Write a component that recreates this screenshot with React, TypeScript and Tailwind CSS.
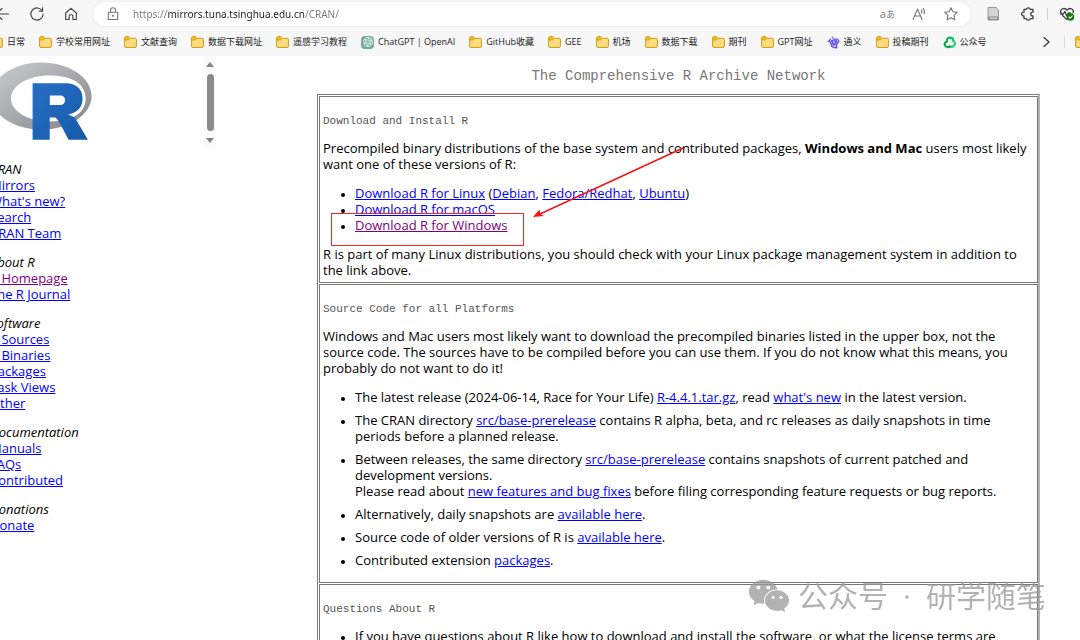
import { type ReactNode } from "react";
import { SiOpenai } from "react-icons/si";
import { FaWeixin } from "react-icons/fa";

function FolderIcon() {
  return (
    <svg viewBox="0 0 13 12" className="h-3 w-[13px] shrink-0" aria-hidden="true">
      <path d="M.6 10V1.900Q.6.7 1.800.7H4.600L6 2.300H11.200Q12.400 2.300 12.400 3.500V10Q12.400 11.400 11 11.400H2Q.6 11.400.6 10Z" fill="#ffdc7c" stroke="#c99a1c" strokeWidth="1" />
      <path d="M1 1.900Q1 1.100 1.800 1.100H4.400L5.600 2.500 4.400 3.700H1Z" fill="#f2b90f" />
      <path d="M1 4H4.600L6 2.500" fill="none" stroke="#c99a1c" strokeWidth=".8" />
    </svg>
  );
}

function OpenAiIcon() {
  return (
    <span className="flex size-[13px] shrink-0 items-center justify-center rounded-sm bg-[#74aa9c] text-white">
      <SiOpenai size={10} aria-hidden="true" />
    </span>
  );
}

function TongyiIcon() {
  return (
    <svg viewBox="0 0 24 24" className="size-[13px] shrink-0" fill="none" strokeWidth="2.6" strokeLinejoin="round" aria-hidden="true">
      <path d="M9 1l3 5h8l2 4" stroke="#7c6cf5" />
      <path d="M22 9l-5 8 1 5-6-1" stroke="#5a3fe0" />
      <path d="M12 22l-3-5-5-8 3-4M1 10h4M7 19l3-2" stroke="#6a55ee" />
      <path d="M8 9h10l-5 8z" stroke="#5a3fe0" fill="#e6e2ff" />
    </svg>
  );
}

function OfficialAccountIcon() {
  return (
    <svg viewBox="0 0 24 24" className="size-[13px] shrink-0" fill="none" strokeWidth="4" strokeLinecap="round" aria-hidden="true">
      <path d="M7 10C7 5 10 3 13 3c4 0 6 3 6 6" stroke="#07c160" />
      <path d="M19 9c3 2 4 5 2 8-2 3-5 4-9 2" stroke="#2dcf78" />
      <path d="M13 19c-3 2-7 2-9-1-2-3-1-6 3-8" stroke="#05a854" />
    </svg>
  );
}

const bookmarks: { label: string; icon?: ReactNode }[] = [
  { label: "日常" },
  { label: "学校常用网址" },
  { label: "文献查询" },
  { label: "数据下载网址" },
  { label: "遥感学习教程" },
  { label: "ChatGPT | OpenAI", icon: <OpenAiIcon /> },
  { label: "GitHub收藏" },
  { label: "GEE" },
  { label: "机场" },
  { label: "数据下载" },
  { label: "期刊" },
  { label: "GPT网址" },
  { label: "通义", icon: <TongyiIcon /> },
  { label: "投稿期刊" },
  { label: "公众号", icon: <OfficialAccountIcon /> },
];

function IconButton({ label, children }: { label: string; children: ReactNode }) {
  return (
    <button type="button" aria-label={label} className="flex size-4 shrink-0 items-center justify-center text-[#3c3c3c]">
      {children}
    </button>
  );
}

function Stroke({ children, className = "size-4" }: { children: ReactNode; className?: string }) {
  return (
    <svg viewBox="0 0 16 16" className={className} fill="none" stroke="currentColor" strokeWidth="1.1" strokeLinecap="round" strokeLinejoin="round" aria-hidden="true">
      {children}
    </svg>
  );
}

function AddressBar() {
  return (
    <div className="flex h-7 items-center">
      <div className="-ml-[5px] flex items-center gap-[18px]">
        <IconButton label="Back">
          <Stroke><path d="M13.500 8H1.500M7 2.500 1.500 8 7 13.500" /></Stroke>
        </IconButton>
        <IconButton label="Refresh">
          <Stroke><path d="M13.300 5A6.100 6.100 0 1 0 14.100 8M13.600 1.800V5.200H10.200" /></Stroke>
        </IconButton>
        <IconButton label="Home">
          <Stroke><path d="M2.700 7 8 2.300l5.300 4.700v6.500H9.900V9.700Q9.900 8.700 8.900 8.700H7.100Q6.100 8.700 6.100 9.700v3.800H2.700Z" /></Stroke>
        </IconButton>
      </div>
      <div className="ml-3.5 flex h-6 flex-1 items-center rounded-full bg-white px-3 shadow-[0_0_3px_#e2e2e2]">
        <Stroke className="size-4 text-[#777]">
          <path d="M3.300 6.200h9.400v7.300H3.300ZM5.500 6V4.200a2.500 2.500 0 0 1 5 0V6" />
          <circle cx="8" cy="9.8" r=".5" fill="currentColor" />
        </Stroke>
        <input
          aria-label="Address"
          type="text"
          defaultValue="https://mirrors.tuna.tsinghua.edu.cn/CRAN/"
          className="ml-3 min-w-0 flex-1 bg-[linear-gradient(to_right,#777_35px,#1c1c1c_35px,#1c1c1c_172px,#777_172px)] bg-clip-text font-['Noto_Sans',sans-serif] text-[10px] leading-4 text-transparent outline-none"
        />
        <div className="flex items-center gap-4 text-[#777]">
          <button type="button" aria-label="Translate" className="flex items-baseline text-[11px] leading-4">
            a<span className="text-[9px]">あ</span>
          </button>
          <button type="button" aria-label="Read aloud">
            <Stroke><path d="M2 13.500 6.500 3 11 13.500M3.600 10H9.400M10.300 4.200Q11.300 5.500 10.600 7M12.200 2.500Q14.300 5 13 7.800" /></Stroke>
          </button>
          <button type="button" aria-label="Add to favorites">
            <Stroke><path d="m8 1.800 1.900 4 4.300.6-3.100 3 .8 4.400L8 11.700l-3.900 2.100.8-4.400-3.100-3 4.300-.6Z" /></Stroke>
          </button>
        </div>
      </div>
      <div className="mr-[5px] ml-3.5 flex items-center">
        <IconButton label="Document viewer">
          <svg viewBox="0 0 16 16" className="size-4" aria-hidden="true">
            <path d="M3 1.500h8.200l2.300 2.300v10.200H3Z" fill="#d4d4d4" stroke="#9a9a9a" />
            <path d="M3 10.500h10.500v3.500H3Z" fill="#8c8c8c" />
            <path d="M4.500 12.200h7.500" stroke="#eee" />
          </svg>
        </IconButton>
        <span className="w-[19px]" />
        <IconButton label="Extensions">
          <Stroke>
            <path d="M4 3.400H6.300a2 1.900 0 0 1 3.900 0H13v2.800a1.900 1.900 0 1 0 0 3.700v2.700h-2.800a2 1.900 0 0 1-3.900 0H4V9.900a1.900 1.900 0 1 1 0-3.700Z" strokeWidth="1.3" />
          </Stroke>
        </IconButton>
        <span className="mx-[11px] h-3 w-px bg-[#cfcfcf]" />
        <IconButton label="Browser essentials">
          <Stroke>
            <path d="M2 7C.4 3.400 5 .8 8 4c3-3.200 7.600-.6 6 3M3.500 9.500 8 13.500l1-1M1.500 8h2.800l1.500-2.500 2 4.500 1.500-3h2" strokeWidth="1.3" />
            <circle cx="11.500" cy="11" r="3.700" fill="#0f7b0f" stroke="none" />
            <path d="m10 11 1.200 1.200L13.200 10" stroke="#fff" />
          </Stroke>
        </IconButton>
      </div>
    </div>
  );
}

function BookmarksBar() {
  return (
    <nav aria-label="Bookmarks" className="flex h-7 items-center justify-between overflow-hidden">
      <ul className="-ml-2.5 flex shrink-0 items-center gap-3.5">
        {bookmarks.map(({ label, icon }) => (
          <li key={label}>
            <button type="button" className="flex items-center gap-1 text-[9px] leading-4 whitespace-nowrap text-[#222]">
              {icon ?? <FolderIcon />}
              {label}
            </button>
          </li>
        ))}
      </ul>
      <div className="-mr-2 flex items-center">
        <IconButton label="More bookmarks">
          <Stroke><path d="m6 3.500 5 4.500-5 4.500" strokeWidth="1.3" /></Stroke>
        </IconButton>
        <span className="mx-2.5 h-3 w-px bg-[#ddd]" />
        <button type="button" aria-label="Other bookmarks"><FolderIcon /></button>
      </div>
    </nav>
  );
}

function RLogo() {
  return (
    <svg viewBox="0 0 724 561" className="h-[78px] w-[101px]" role="img" aria-label="R">
      <defs>
        <linearGradient id="ring" x1="0" y1="0" x2="1" y2="1">
          <stop offset="0" stopColor="#cbced0" />
          <stop offset="1" stopColor="#84838b" />
        </linearGradient>
        <linearGradient id="letter" x1="0" y1="0" x2="1" y2="1">
          <stop offset="0" stopColor="#276dc3" />
          <stop offset="1" stopColor="#165caa" />
        </linearGradient>
      </defs>
      <path fill="url(#ring)" fillRule="evenodd" d="M361.453,485.937C162.329,485.937,0.906,377.828,0.906,244.469C0.906,111.109,162.329,3,361.453,3C560.581,3,722,111.109,722,244.469C722,377.828,560.581,485.937,361.453,485.937ZM416.641,97.406C265.289,97.406,142.594,171.314,142.594,262.484C142.594,353.654,265.289,427.562,416.641,427.562C567.992,427.562,679.687,377.033,679.687,262.484C679.687,147.971,567.992,97.406,416.641,97.406Z" />
      <path fill="url(#letter)" fillRule="evenodd" d="M550,377C550,377,571.822,383.585,584.5,390C588.899,392.226,596.51,396.668,602,402.5C607.378,408.212,610,414,610,414L696,559L557,559.062L492,437C492,437,478.69,414.131,470.5,407.5C463.668,401.969,460.755,400,454,400C449.298,400,420.974,400,420.974,400L421,558.974L298,559.026L298,152.938L545,152.938C545,152.938,657.5,154.967,657.5,262C657.5,369.033,550,377,550,377ZM496.5,241.024L422.037,240.976L422,310.026L496.5,310.002C496.5,310.002,531,309.895,531,274.877C531,239.155,496.5,241.024,496.5,241.024Z" />
    </svg>
  );
}

function A({ children, visited = false }: { children: ReactNode; visited?: boolean }) {
  return (
    <a href="#" className={visited ? "text-[#800080] underline" : "text-[#0000ff] underline"}>
      {children}
    </a>
  );
}

const menu = [
  { title: "CRAN", links: ["Mirrors", "What's new?", "Search", "CRAN Team"] },
  { title: "About R", links: ["R Homepage", "The R Journal"] },
  { title: "Software", links: ["R Sources", "R Binaries", "Packages", "Task Views", "Other"] },
  { title: "Documentation", links: ["Manuals", "FAQs", "Contributed"] },
  { title: "Donations", links: ["Donate"] },
];

function Sidebar() {
  return (
    <aside className="w-[204px] shrink-0 overflow-hidden pt-1.5">
      <div className="-ml-[9px]">
        <RLogo />
        <nav aria-label="CRAN" className="mt-[21px] -ml-px flex flex-col gap-[13px]">
          {menu.map(({ title, links }) => (
            <div key={title}>
              <em className="block">{title}</em>
              <ul>
                {links.map((link) => (
                  <li key={link}><A visited={link === "R Homepage"}>{link}</A></li>
                ))}
              </ul>
            </div>
          ))}
        </nav>
      </div>
    </aside>
  );
}

function FrameScrollbar() {
  return (
    <div className="flex h-[93px] w-3 shrink-0 flex-col items-center justify-between bg-[#fafafa] pt-1.5 pb-1.5" aria-hidden="true">
      <svg viewBox="0 0 8 5" className="h-[5px] w-2"><path d="M0 5 4 0l4 5z" fill="#858585" /></svg>
      <span className="h-[57px] w-[7px] rounded-full bg-[#8b8b8b]" />
      <svg viewBox="0 0 8 5" className="h-[5px] w-2"><path d="M0 0l4 5 4-5z" fill="#858585" /></svg>
    </div>
  );
}

function Cell({ title, children, className }: { title: string; children: ReactNode; className: string }) {
  return (
    <section className={`flex flex-col gap-[13px] border border-[#777] px-[3px] pt-4 ${className}`}>
      <h2 className="-mb-0.5 font-['Liberation_Mono',monospace] text-[11px] leading-4 text-[#555]">{title}</h2>
      {children}
    </section>
  );
}

function Annotation() {
  return (
    <>
      <svg viewBox="0 0 193 33" className="absolute -top-1 -left-6 h-[33px] w-[193px]" aria-hidden="true">
        <rect x=".5" y=".5" width="192" height="32" fill="none" stroke="#ff2020" />
      </svg>
      <svg viewBox="0 0 152 72" className="absolute -top-[70px] left-[177px] h-[72px] w-[152px]" aria-hidden="true">
        <path d="M151 1 8 67" stroke="#f21515" strokeWidth="1.5" />
        <path d="M1 70 7.500 62.500l.8 4.200 3.700 2.300z" fill="#f21515" />
      </svg>
    </>
  );
}

function MainContent() {
  return (
    <main className="min-w-0 flex-1 pr-10 pl-[101px]">
      <h1 className="pt-2.5 text-center font-['Liberation_Mono',monospace] text-sm leading-5 text-[#777]">
        The Comprehensive R Archive Network
      </h1>
      <div className="mt-2 flex flex-col gap-px border border-r-2 border-[#777] border-r-[#b4b4b4] p-px pr-0">
        <Cell title="Download and Install R" className="pb-1">
          <p>
            Precompiled binary distributions of the base system and contributed packages, <strong>Windows and Mac</strong> users most likely want one of these versions of R:
          </p>
          <ul className="list-disc pl-8 marker:text-[10px]">
            <li><A>Download R for Linux</A> (<A>Debian</A>, <A>Fedora/Redhat</A>, <A>Ubuntu</A>)</li>
            <li><A>Download R for macOS</A></li>
            <li className="relative"><A visited>Download R for Windows</A><Annotation /></li>
          </ul>
          <p>
            R is part of many Linux distributions, you should check with your Linux package management system in addition to the link above.
          </p>
        </Cell>
        <Cell title="Source Code for all Platforms" className="pb-3.5">
          <p>
            Windows and Mac users most likely want to download the precompiled binaries listed in the upper box, not the source code. The sources have to be compiled before you can use them. If you do not know what this means, you probably do not want to do it!
          </p>
          <ul className="flex list-disc flex-col gap-[7px] pl-8 marker:text-[10px]">
            <li>The latest release (2024-06-14, Race for Your Life) <A>R-4.4.1.tar.gz</A>, read <A>what's new</A> in the latest version.</li>
            <li>The CRAN directory <A>src/base-prerelease</A> contains R alpha, beta, and rc releases as daily snapshots in time periods before a planned release.</li>
            <li>
              Between releases, the same directory <A>src/base-prerelease</A> contains snapshots of current patched and development versions.
              <br />
              Please read about <A>new features and bug fixes</A> before filing corresponding feature requests or bug reports.
            </li>
            <li>Alternatively, daily snapshots are <A>available here</A>.</li>
            <li>Source code of older versions of R is <A>available here</A>.</li>
            <li>Contributed extension <A>packages</A>.</li>
          </ul>
        </Cell>
        <Cell title="Questions About R" className="pb-4">
          <ul className="list-disc pl-8 marker:text-[10px]">
            <li>If you have questions about R like how to download and install the software, or what the license terms are,</li>
          </ul>
        </Cell>
      </div>
    </main>
  );
}

export default function App() {
  return (
    <div className="relative h-screen overflow-hidden bg-white font-['Open_Sans','Noto_Sans_CJK_SC',sans-serif] text-[13px] leading-4 text-black">
      <header className="bg-[#f7f7f7]">
        <AddressBar />
        <BookmarksBar />
      </header>
      <div className="flex items-start">
        <Sidebar />
        <FrameScrollbar />
        <MainContent />
      </div>
      <div className="absolute right-[34px] bottom-[22px] flex items-center gap-2 text-[#999] opacity-75">
        <FaWeixin size={42} aria-hidden="true" />
        <span className="flex gap-[15px] text-[30px] leading-[44px] whitespace-nowrap">
          <span>公众号</span>
          <span>·</span>
          <span>研学随笔</span>
        </span>
      </div>
    </div>
  );
}
